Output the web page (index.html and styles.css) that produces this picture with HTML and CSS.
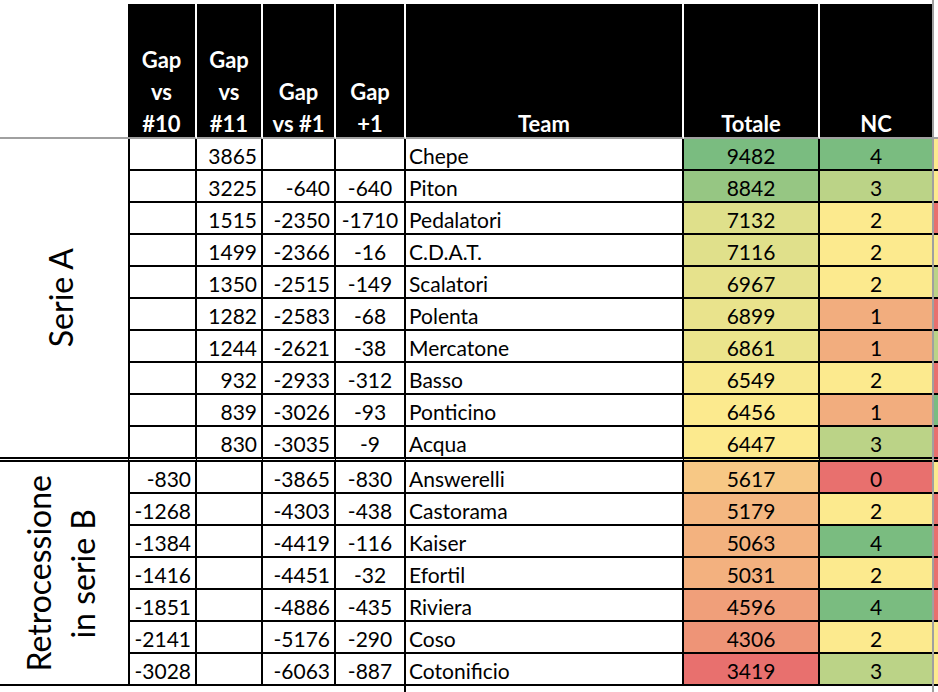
FILE: index.html
```html
<!DOCTYPE html>
<html lang="it">
<head>
<meta charset="utf-8">
<title>Classifica</title>
<link rel="stylesheet" href="styles.css">
</head>
<body>
<div class="sheet">
  <div class="grid">
    <div class="hd hd-blank"></div>
    <div class="hd hd-col"><span>Gap<br>vs<br>#10</span></div>
    <div class="hd hd-col"><span>Gap<br>vs<br>#11</span></div>
    <div class="hd hd-col"><span>Gap<br>vs #1</span></div>
    <div class="hd hd-col"><span>Gap<br>+1</span></div>
    <div class="hd hd-col"><span>Team</span></div>
    <div class="hd hd-col"><span>Totale</span></div>
    <div class="hd hd-col"><span>NC</span></div>
    <div class="hd hd-blank"></div>

    <div class="label label-a"><span>Serie A</span></div>
    <div class="cell num c1"></div><div class="cell num">3865</div><div class="cell num"></div><div class="cell ctr"></div><div class="cell team">Chepe</div><div class="cell ctr" style="background:#7abc80">9482</div><div class="cell ctr nc4">4</div><div class="cell nx yel"></div>
    <div class="cell num c1"></div><div class="cell num">3225</div><div class="cell num">-640</div><div class="cell ctr">-640</div><div class="cell team">Piton</div><div class="cell ctr" style="background:#96c683">8842</div><div class="cell ctr nc3">3</div><div class="cell nx yel"></div>
    <div class="cell num c1"></div><div class="cell num">1515</div><div class="cell num">-2350</div><div class="cell ctr">-1710</div><div class="cell team">Pedalatori</div><div class="cell ctr" style="background:#dfe08b">7132</div><div class="cell ctr nc2">2</div><div class="cell nx red"></div>
    <div class="cell num c1"></div><div class="cell num">1499</div><div class="cell num">-2366</div><div class="cell ctr">-16</div><div class="cell team">C.D.A.T.</div><div class="cell ctr" style="background:#e0e08b">7116</div><div class="cell ctr nc2">2</div><div class="cell nx yel"></div>
    <div class="cell num c1"></div><div class="cell num">1350</div><div class="cell num">-2515</div><div class="cell ctr">-149</div><div class="cell team">Scalatori</div><div class="cell ctr" style="background:#e6e28c">6967</div><div class="cell ctr nc2">2</div><div class="cell nx lgr"></div>
    <div class="cell num c1"></div><div class="cell num">1282</div><div class="cell num">-2583</div><div class="cell ctr">-68</div><div class="cell team">Polenta</div><div class="cell ctr" style="background:#e9e38c">6899</div><div class="cell ctr nc1">1</div><div class="cell nx red"></div>
    <div class="cell num c1"></div><div class="cell num">1244</div><div class="cell num">-2621</div><div class="cell ctr">-38</div><div class="cell team">Mercatone</div><div class="cell ctr" style="background:#ebe48c">6861</div><div class="cell ctr nc1">1</div><div class="cell nx lgr"></div>
    <div class="cell num c1"></div><div class="cell num">932</div><div class="cell num">-2933</div><div class="cell ctr">-312</div><div class="cell team">Basso</div><div class="cell ctr" style="background:#f8e98e">6549</div><div class="cell ctr nc2">2</div><div class="cell nx red"></div>
    <div class="cell num c1"></div><div class="cell num">839</div><div class="cell num">-3026</div><div class="cell ctr">-93</div><div class="cell team">Ponticino</div><div class="cell ctr" style="background:#fcea8e">6456</div><div class="cell ctr nc1">1</div><div class="cell nx grn"></div>
    <div class="cell num c1 last"></div><div class="cell num last">830</div><div class="cell num last">-3035</div><div class="cell ctr last">-9</div><div class="cell team last">Acqua</div><div class="cell ctr last" style="background:#fcea8e">6447</div><div class="cell ctr nc3 last">3</div><div class="cell nx red last"></div>

    <div class="label label-b"><span>Retrocessione<br>in serie B</span></div>
    <div class="cell num c1">-830</div><div class="cell num"></div><div class="cell num">-3865</div><div class="cell ctr">-830</div><div class="cell team">Answerelli</div><div class="cell ctr" style="background:#f7c885">5617</div><div class="cell ctr nc0">0</div><div class="cell nx yel"></div>
    <div class="cell num c1">-1268</div><div class="cell num"></div><div class="cell num">-4303</div><div class="cell ctr">-438</div><div class="cell team">Castorama</div><div class="cell ctr" style="background:#f4b781">5179</div><div class="cell ctr nc2">2</div><div class="cell nx red"></div>
    <div class="cell num c1">-1384</div><div class="cell num"></div><div class="cell num">-4419</div><div class="cell ctr">-116</div><div class="cell team">Kaiser</div><div class="cell ctr" style="background:#f3b27f">5063</div><div class="cell ctr nc4">4</div><div class="cell nx red"></div>
    <div class="cell num c1">-1416</div><div class="cell num"></div><div class="cell num">-4451</div><div class="cell ctr">-32</div><div class="cell team">Efortil</div><div class="cell ctr" style="background:#f3b17f">5031</div><div class="cell ctr nc2">2</div><div class="cell nx red"></div>
    <div class="cell num c1">-1851</div><div class="cell num"></div><div class="cell num">-4886</div><div class="cell ctr">-435</div><div class="cell team">Riviera</div><div class="cell ctr" style="background:#f09f7a">4596</div><div class="cell ctr nc4">4</div><div class="cell nx red"></div>
    <div class="cell num c1">-2141</div><div class="cell num"></div><div class="cell num">-5176</div><div class="cell ctr">-290</div><div class="cell team">Coso</div><div class="cell ctr" style="background:#ee9477">4306</div><div class="cell ctr nc2">2</div><div class="cell nx yel"></div>
    <div class="cell num c1">-3028</div><div class="cell num"></div><div class="cell num">-6063</div><div class="cell ctr">-887</div><div class="cell team">Cotonificio</div><div class="cell ctr" style="background:#e8706e">3419</div><div class="cell ctr nc3">3</div><div class="cell nx yel"></div>

    <div class="tail"></div><div class="tail"></div><div class="tail"></div><div class="tail"></div><div class="tail tail-edge"></div><div class="tail"></div><div class="tail"></div><div class="tail"></div><div class="tail"></div>
  </div>
  <div class="pane-v"></div>
</div>
</body>
</html>
```

FILE: styles.css
```css
html, body {
  margin: 0;
  padding: 0;
  background: #ffffff;
}

.sheet {
  position: relative;
  width: 938px;
  height: 692px;
  overflow: hidden;
  font-family: Lato, "Open Sans", "Liberation Sans", sans-serif;
  color: #000;
}

.grid {
  display: grid;
  margin-top: 4px;
  width: 974px;
  grid-template-columns: 128px 69px 66px 73px 70px 278px 136px 114px 40px;
  grid-template-rows: 135px repeat(9, 32px) 35px repeat(7, 32px) 32px;
}

.hd {
  box-sizing: border-box;
  border-bottom: 2px solid #a0a0a0;
}

.hd-blank {
  background: #fff;
}

.hd-col {
  background: #000;
  color: #fff;
  border-right: 2px solid #fff;
  display: flex;
  align-items: flex-end;
  justify-content: center;
  text-align: center;
  font-weight: 700;
  font-size: 22px;
  line-height: 32px;
}

.hd-col span {
  margin-bottom: -3px;
}

.label {
  box-sizing: border-box;
  display: flex;
  align-items: center;
  justify-content: center;
  padding-right: 6px;
}

.label span {
  writing-mode: vertical-rl;
  transform: rotate(180deg);
  font-size: 32px;
  line-height: 44px;
  text-align: center;
  white-space: nowrap;
}

.label-a {
  grid-row: span 10;
  border-bottom: 5px double #000;
}

.label-b {
  grid-row: span 7;
  border-bottom: 2px solid #000;
}

.cell {
  box-sizing: border-box;
  border-right: 2px solid #000;
  border-bottom: 2px solid #000;
  font-size: 21px;
  line-height: 28px;
  padding-top: 3px;
  white-space: nowrap;
  overflow: hidden;
}

.cell.last {
  border-bottom: 5px double #000;
}

.c1 {
  border-left: 2px solid #000;
}

.num {
  text-align: right;
  padding-right: 4px;
}

.ctr {
  text-align: center;
}

.team {
  text-align: left;
  padding-left: 3px;
}

.nc4, .grn { background: #7abc80; }
.nc3, .lgr { background: #bbd387; }
.nc2, .yel { background: #fcea8e; }
.nc1 { background: #f2ad7e; }
.nc0, .red { background: #e8706e; }

.nx {
  border-right: none;
}

.tail {
  box-sizing: border-box;
}

.tail-edge {
  border-right: 2px solid #000;
}

.pane-v {
  position: absolute;
  left: 932px;
  top: 0;
  width: 2px;
  height: 100%;
  background: #a0a0a0;
}
```
